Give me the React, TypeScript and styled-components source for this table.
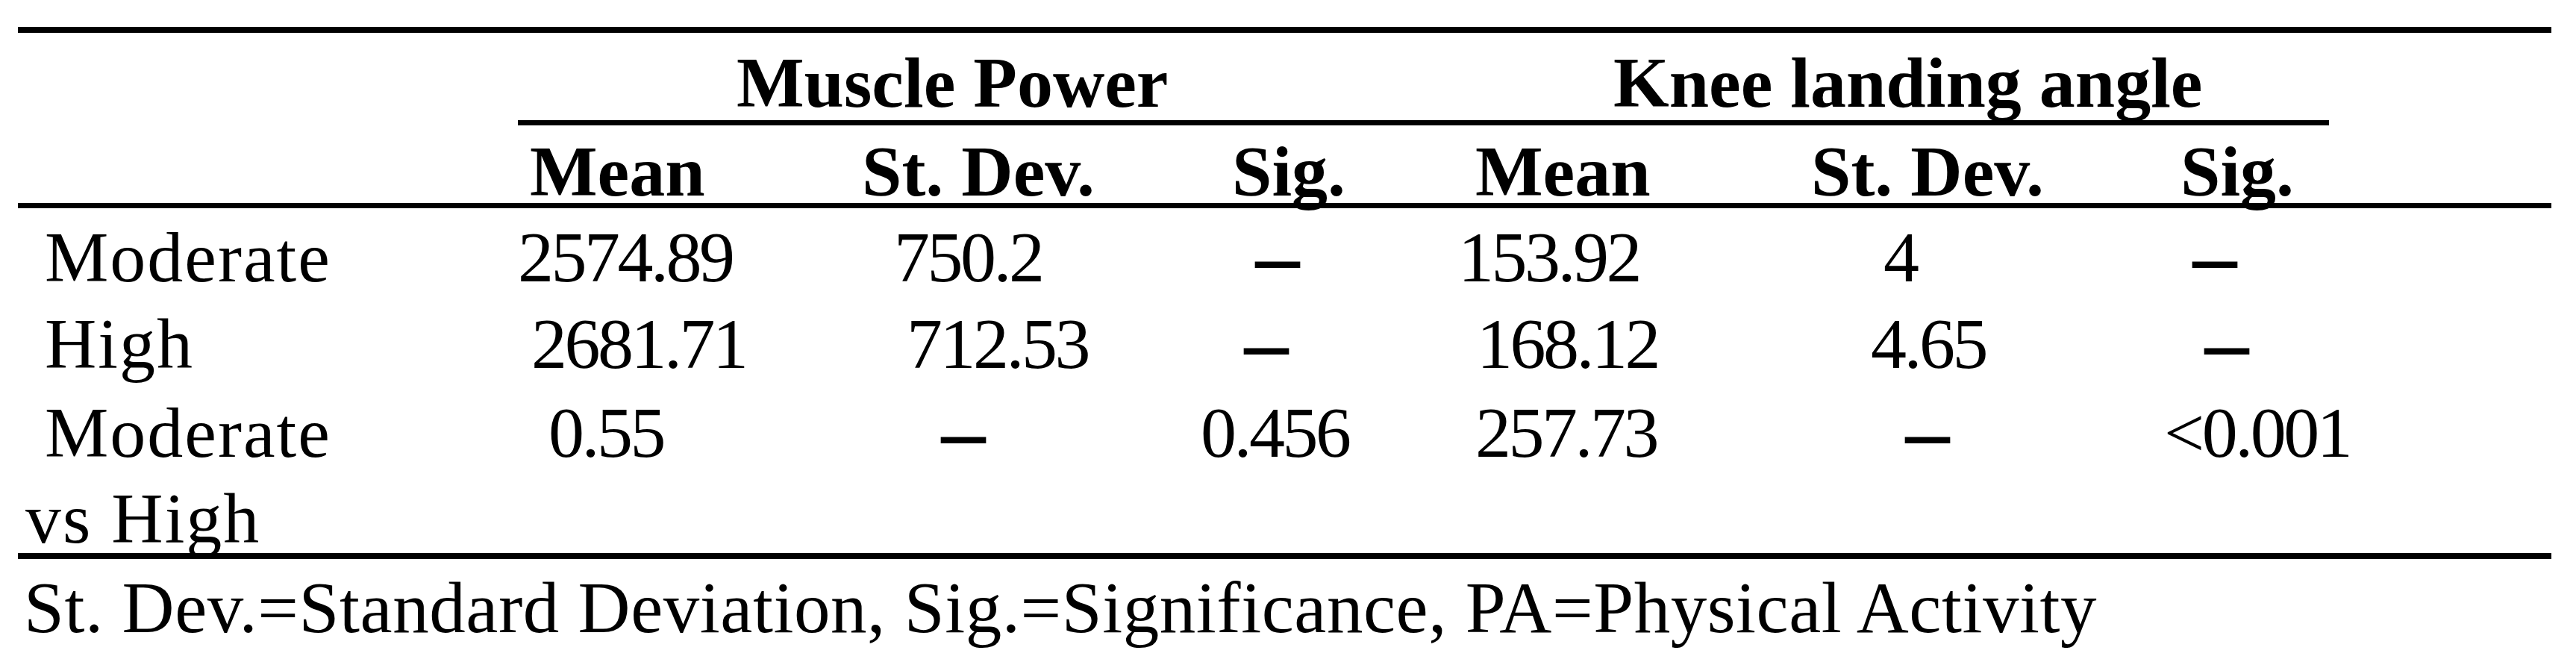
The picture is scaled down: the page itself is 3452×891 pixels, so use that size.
import styled, { createGlobalStyle } from 'styled-components';

const GlobalStyle = createGlobalStyle`
  html, body {
    margin: 0;
    background: #fff;
  }
  body {
    font-family: "Liberation Serif", "Times New Roman", serif;
    color: #000;
  }
`;

// label column + 3 muscle power columns + 3 knee angle columns
const COLUMNS = '670px 461px 454px 345px 473px 473px 519px';

const Page = styled.div`
  padding: 36px 0 0 24px;
`;

const Table = styled.div`
  width: 3395px;
  border-top: 8px solid #000;
`;

const GroupRow = styled.div`
  display: grid;
  grid-template-columns: ${COLUMNS};
  height: 124px;
`;

const GroupTitle = styled.div<{ $span: string; $indent: number; $trim?: number }>`
  grid-column: ${p => p.$span};
  box-sizing: border-box;
  height: 124px;
  margin-right: ${p => p.$trim ?? 0}px;
  padding: 17px 0 0 ${p => p.$indent}px;
  border-bottom: 7px solid #000;
  font-size: 96px;
  font-weight: 700;
  line-height: 100px;
  white-space: nowrap;
`;

const SubRow = styled.div`
  display: grid;
  grid-template-columns: ${COLUMNS};
  box-sizing: border-box;
  height: 111px;
  border-bottom: 7px solid #000;
`;

const HeadCell = styled.div<{ $indent: number }>`
  padding: 20px 0 0 ${p => p.$indent}px;
  font-size: 96px;
  font-weight: 700;
  line-height: 84px;
  white-space: nowrap;
`;

const Body = styled.div`
  display: grid;
  grid-template-columns: ${COLUMNS};
  grid-template-rows: 116px 119px 219px;
  padding-top: 8px;
  border-bottom: 8px solid #000;
`;

const Label = styled.div`
  padding-left: 10px;
  text-indent: 26px;
  font-size: 96px;
  line-height: 115px;
  letter-spacing: 2px;
  white-space: pre-line;
`;

const Value = styled.div<{ $indent: number }>`
  padding-left: ${p => p.$indent}px;
  font-size: 96px;
  line-height: 115px;
  letter-spacing: -3.5px;
  white-space: nowrap;
`;

const Dash = styled.span`
  font-family: "DejaVu Sans", sans-serif;
  font-weight: 700;
  font-size: 68px;
  letter-spacing: 0;
  vertical-align: 4px;
`;

const Footnote = styled.p`
  margin: 0;
  padding: 8px 0 0 8px;
  font-size: 97px;
  line-height: 115px;
  letter-spacing: 0.55px;
  white-space: nowrap;
`;

type Cell = { v: string; x: number };

const heads: Cell[] = [
  { v: 'Mean', x: 16 },
  { v: 'St. Dev.', x: 0 },
  { v: 'Sig.', x: 42 },
  { v: 'Mean', x: 23 },
  { v: 'St. Dev.', x: 0 },
  { v: 'Sig.', x: 22 },
];

const DASH = '—';

const rows: { label: string; cells: Cell[] }[] = [
  {
    label: 'Moderate',
    cells: [
      { v: '2574.89', x: 0 },
      { v: '750.2', x: 43 },
      { v: DASH, x: 69 },
      { v: '153.92', x: 0 },
      { v: '4', x: 97 },
      { v: DASH, x: 34 },
    ],
  },
  {
    label: 'High',
    cells: [
      { v: '2681.71', x: 18 },
      { v: '712.53', x: 60 },
      { v: DASH, x: 54 },
      { v: '168.12', x: 25 },
      { v: '4.65', x: 80 },
      { v: DASH, x: 50 },
    ],
  },
  {
    label: 'Moderate\nvs High',
    cells: [
      { v: '0.55', x: 41 },
      { v: DASH, x: 102 },
      { v: '0.456', x: 0 },
      { v: '257.73', x: 23 },
      { v: DASH, x: 122 },
      { v: '<0.001', x: 0 },
    ],
  },
];

export default function App() {
  return (
    <>
      <GlobalStyle />
      <Page>
        <Table>
          <GroupRow>
            <div />
            <GroupTitle $span="2 / 5" $indent={293}>Muscle Power</GroupTitle>
            <GroupTitle $span="5 / 8" $indent={208} $trim={298}>Knee landing angle</GroupTitle>
          </GroupRow>
          <SubRow>
            <div />
            {heads.map((h, i) => (
              <HeadCell key={i} $indent={h.x}>{h.v}</HeadCell>
            ))}
          </SubRow>
          <Body>
            {rows.map(r => [
              <Label key={r.label}>{r.label}</Label>,
              ...r.cells.map((c, i) => (
                <Value key={r.label + i} $indent={c.x}>
                  {c.v === DASH ? <Dash>{DASH}</Dash> : c.v}
                </Value>
              )),
            ])}
          </Body>
        </Table>
        <Footnote>St. Dev.=Standard Deviation, Sig.=Significance, PA=Physical Activity</Footnote>
      </Page>
    </>
  );
}
